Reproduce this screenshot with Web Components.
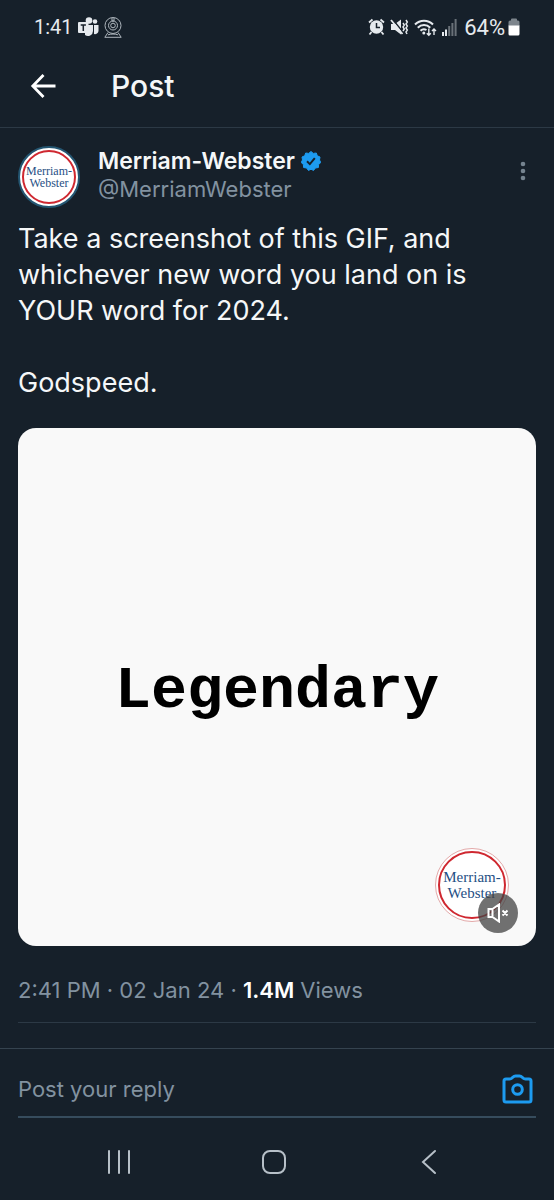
<!DOCTYPE html>
<html lang="en">
<head>
<meta charset="utf-8">
<meta name="viewport" content="width=device-width, initial-scale=1">
<title>Post</title>
<style>
	:root {
		--bg: #16202a;
		--text: #f5f7f8;
		--muted: #8292a0;
		--line: #2c3945;
		--blue: #1d9bf0;
		--side: 18px;
	}

	body {
		margin: 0;
		background: var(--bg);
		color: var(--text);
		font-family: Inter, 'Liberation Sans', sans-serif;
	}
</style>
</head>
<body>
<post-screen>
	<status-bar slot="top" time="1:41" battery="64%"></status-bar>
	<page-header slot="top">Post</page-header>
	<post-card name="Merriam-Webster" handle="@MerriamWebster">
		<span slot="text">Take a screenshot of this GIF, and whichever new word you land on is YOUR word for 2024.<br><br>Godspeed.</span>
		<gif-player slot="media">Legendary</gif-player>
		<span slot="date">2:41 PM · 02 Jan 24</span>
		<span slot="views">1.4M</span>
	</post-card>
	<reply-bar slot="bottom"></reply-bar>
	<nav-bar slot="bottom"></nav-bar>
</post-screen>

<script>
function define(name, html, setup) {
	const template = document.createElement('template');
	template.innerHTML = html;

	customElements.define(name, class extends HTMLElement {
		connectedCallback() {
			if (this.shadowRoot) return;
			const root = this.attachShadow({ mode: 'open' });
			root.appendChild(template.content.cloneNode(true));
			if (setup) setup(this, root);
		}
	});
}

// shared by every element that holds icon buttons
const buttonReset = `
	button {
		display: flex;
		align-items: center;
		justify-content: center;
		padding: 0;
		border: 0;
		background: none;
		color: inherit;
		font: inherit;
		cursor: pointer;
	}
	svg { display: block; flex: none; }
`;

define('post-screen', `
	<style>
		:host {
			display: flex;
			flex-direction: column;
			min-height: 100vh;
		}
		main { flex: 1; }
	</style>
	<slot name="top"></slot>
	<main><slot></slot></main>
	<slot name="bottom"></slot>
`);

define('status-bar', `
	<style>
		:host {
			display: flex;
			align-items: center;
			justify-content: space-between;
			height: 54px;
			padding: 0 34px;
			font-family: Roboto, sans-serif;
			font-size: 22px;
			color: #e6eaee;
		}
		.group { display: flex; align-items: center; gap: 5px; }
		.time { font-size: 20px; }
		.battery { display: flex; align-items: center; gap: 3px; margin-left: 2px; }
		svg { display: block; }
	</style>
	<div class="group">
		<span class="time"></span>
		<svg width="21" height="20" viewBox="0 0 21 20" fill="currentColor">
			<circle cx="11" cy="3.5" r="3.3"/>
			<circle cx="17" cy="4.5" r="2.3"/>
			<path d="M7 8h8v6a5 5 0 0 1-8 4z"/>
			<path d="M16 8h4.500v6a3.500 3.500 0 0 1-4.500 3z"/>
			<rect x="0" y="5" width="10.500" height="11" rx="1"/>
			<path d="M2.700 8h5.200M5.300 8v6" stroke="#17202a" stroke-width="1.500" fill="none"/>
		</svg>
		<svg width="18" height="21" viewBox="0 0 18 21" fill="none" stroke="#aeb6bd" stroke-width="1">
			<circle cx="9" cy="8.500" r="8"/>
			<circle cx="9" cy="8.500" r="4.500"/>
			<circle cx="9" cy="8.500" r="2.300"/>
			<path d="M8 1v3h2V1M4 15.500L.8 20.300h16.400L14 15.500M4 17.800c3-1 7-1 10 0"/>
		</svg>
	</div>
	<div class="group">
		<svg width="17" height="18" viewBox="0 0 17 18">
			<circle cx="8.500" cy="9" r="6.700" fill="currentColor"/>
			<path d="M1 4.500L4.500 1.500M16 4.500L12.500 1.500M3.500 14L1.500 16.500M13.500 14l2 2.500" stroke="currentColor" stroke-width="1.800"/>
			<path d="M8.500 5v4.500h3.500" fill="none" stroke="#17202a" stroke-width="1.500"/>
		</svg>
		<svg width="19" height="18" viewBox="0 0 19 18">
			<path d="M1 6h4l6-4.500v15L5 12H1z" fill="currentColor"/>
			<path d="M2 .5l12 15" stroke="#17202a" stroke-width="1.500"/>
			<path d="M1 2l11.500 14" stroke="currentColor" stroke-width="1.800"/>
			<path d="M13 5l1.300 2L13 9l1.300 2L13 13M16 2l1.300 2L16 6l1.300 2L16 10l1.300 2L16 14l1 2" fill="none" stroke="currentColor" stroke-width="1.500"/>
		</svg>
		<svg width="23" height="19" viewBox="0 0 23 19" fill="none" stroke="currentColor" stroke-width="2">
			<path d="M1 6.500a12.500 12.500 0 0 1 18 0M3.800 9.800a8.500 8.500 0 0 1 12.400 0M6.500 12.800a5 5 0 0 1 6-.8"/>
			<circle cx="9.800" cy="15" r="1.500" fill="currentColor" stroke="none"/>
			<path d="M14.800 10.500v7M12.800 15.200l2 2 2-2M20 17v-6M18 13l2-2 2 2" stroke-width="1.400"/>
		</svg>
		<svg width="15" height="17" viewBox="0 0 15 17" fill="currentColor">
			<path d="M0 13h2v4H0zM3 10.500h2V17H3z"/>
			<path d="M6.200 7h2v10h-2zM9.400 4h2v13h-2zM12.600 0h2v17h-2z" opacity=".4"/>
		</svg>
		<span class="battery">
			<span class="level"></span>
			<svg width="12" height="18" viewBox="0 0 12 18">
				<path d="M3 2.500V1.500Q3 .5 4 .5h4q1 0 1 1v1h1q1.500 0 1.500 1.500v4H.5V4q0-1.500 1.500-1.500z" fill="#7d858c"/>
				<path d="M.5 7.500h11V16q0 1.500-1.500 1.500H2Q.5 17.500.5 16z" fill="#fff"/>
			</svg>
		</span>
	</div>
`, (host, root) => {
	root.querySelector('.time').textContent = host.getAttribute('time');
	root.querySelector('.level').textContent = host.getAttribute('battery');
});

define('page-header', `
	<style>
		${buttonReset}
		:host {
			display: flex;
			align-items: center;
			gap: 54px;
			height: 74px;
			padding: 0 30px 10px;
			box-sizing: border-box;
			border-bottom: 1px solid var(--line);
		}
		h1 {
			margin: 0;
			font-size: 30px;
			font-weight: 500;
		}
	</style>
	<button aria-label="Back">
		<svg width="27" height="26" viewBox="0 0 27 26" fill="none" stroke="#fff" stroke-width="2.800">
			<path d="M25.500 13H3M13.500 2L2.800 13l10.700 11"/>
		</svg>
	</button>
	<h1><slot></slot></h1>
`);

define('mw-logo', `
	<style>
		:host {
			display: flex;
			align-items: center;
			justify-content: center;
			width: 62px;
			height: 62px;
			box-sizing: border-box;
			border: 2px solid #245672;
			border-radius: 50%;
			background: #fff;
			padding: 2px;
			font-size: 12px;
			line-height: 12px;
		}
		:host([large]) {
			width: 74px;
			height: 74px;
			border: 1px solid #e3a9a9;
			font-size: 15px;
			line-height: 16px;
		}
		.ring {
			display: flex;
			align-items: center;
			justify-content: center;
			width: 100%;
			height: 100%;
			box-sizing: border-box;
			border: 2px solid #cf2830;
			border-radius: 50%;
			color: #1f4f84;
			font-family: 'Liberation Serif', serif;
			text-align: center;
		}
	</style>
	<div class="ring"><span>Merriam-<br>Webster</span></div>
`);

define('post-card', `
	<style>
		${buttonReset}
		:host {
			display: block;
			padding: 18px var(--side) 0;
		}
		.author {
			display: flex;
			align-items: center;
			gap: 18px;
		}
		.names {
			flex: 1;
			font-size: 22px;
			line-height: 28px;
			padding-bottom: 4px;
		}
		.name {
			display: flex;
			align-items: center;
			gap: 6px;
			font-size: 23px;
			font-weight: 600;
		}
		.handle, .meta { color: var(--muted); }
		.more { width: 26px; height: 40px; margin-bottom: 12px; }
		.text {
			margin: 13px 0 27px;
			font-size: 27px;
			line-height: 36px;
		}
		.meta {
			margin: 0;
			padding: 29px 0 17px;
			border-bottom: 1px solid var(--line);
			font-size: 22px;
			line-height: 30px;
		}
		.meta b { color: #fff; font-weight: 600; }
	</style>
	<article>
		<div class="author">
			<mw-logo></mw-logo>
			<div class="names">
				<div class="name">
					<span id="name"></span>
					<svg width="20" height="20" viewBox="0 0 20 20" aria-label="Verified">
						<path d="M10 .5l2.300 1.900 3-.4 1 2.800 2.700 1.200-.5 3 1.300 2.500-2.200 2-.2 3-3 .5-1.800 2.400L10 18.300l-2.600 1.100-1.800-2.400-3-.5-.2-3-2.200-2L1.500 9 1 6l2.700-1.200 1-2.800 3 .4z" fill="#1d9bf0" stroke="#1d9bf0" stroke-linejoin="round"/>
						<path d="M6 10.300l2.800 2.800 5-6" fill="none" stroke="#17202a" stroke-width="2"/>
					</svg>
				</div>
				<div class="handle"></div>
			</div>
			<button class="more" aria-label="More">
				<svg width="6" height="20" viewBox="0 0 6 20" fill="#75838f">
					<circle cx="3" cy="3" r="2.300"/><circle cx="3" cy="10" r="2.300"/><circle cx="3" cy="17" r="2.300"/>
				</svg>
			</button>
		</div>
		<div class="text"><slot name="text"></slot></div>
		<slot name="media"></slot>
		<p class="meta"><slot name="date"></slot> · <b><slot name="views"></slot></b> Views</p>
	</article>
`, (host, root) => {
	root.querySelector('#name').textContent = host.getAttribute('name');
	root.querySelector('.handle').textContent = host.getAttribute('handle');
});

define('gif-player', `
	<style>
		${buttonReset}
		:host {
			display: flex;
			align-items: center;
			justify-content: center;
			position: relative;
			aspect-ratio: 1;
			border-radius: 18px;
			background: #f9f9f9;
			color: #000;
		}
		.word {
			padding-top: 8px;
			font-family: 'Liberation Mono', monospace;
			font-size: 60px;
			font-weight: 700;
		}
		/* logo and mute button lie over the picture */
		mw-logo { position: absolute; right: 27px; bottom: 24px; }
		.mute {
			position: absolute;
			right: 18px;
			bottom: 13px;
			width: 40px;
			height: 40px;
			border-radius: 50%;
			background: rgba(65, 65, 65, 0.75);
		}
	</style>
	<span class="word"><slot></slot></span>
	<mw-logo large></mw-logo>
	<button class="mute" aria-label="Unmute">
		<svg width="22" height="20" viewBox="0 0 22 20" fill="none" stroke="#fff" stroke-width="2">
			<path d="M1.500 6h4v8h-4zM5.500 6L12 1.500v17L5.500 14M15.500 7.500l5 5M20.500 7.500l-5 5"/>
		</svg>
	</button>
`);

define('reply-bar', `
	<style>
		${buttonReset}
		:host {
			display: block;
			padding: 0 var(--side);
			border-top: 1px solid #35434f;
		}
		.field {
			display: flex;
			align-items: center;
			height: 69px;
			box-sizing: border-box;
			padding: 12px 3px 0 0;
			border-bottom: 2px solid #364c5d;
		}
		input {
			flex: 1;
			min-width: 0;
			padding: 0;
			border: 0;
			outline: 0;
			background: none;
			color: var(--text);
			font: inherit;
			font-size: 22px;
			line-height: 30px;
		}
		input::placeholder { color: var(--muted); opacity: 1; }
	</style>
	<div class="field">
		<input type="text" placeholder="Post your reply" aria-label="Post your reply">
		<button aria-label="Add photo">
			<svg width="31" height="30" viewBox="0 0 31 30" fill="none" stroke="#1d9bf0" stroke-width="3">
				<path d="M4 5h3.500q1.500 0 2.500-1l.8-.8Q12 2 13.500 2h4q1.500 0 2.700 1.200L21 4q1 1 2.500 1H27q2 0 2 2v19q0 2-2 2H4q-2 0-2-2V7q0-2 2-2z"/>
				<circle cx="15.500" cy="15.500" r="4.800"/>
			</svg>
		</button>
	</div>
`);

define('nav-bar', `
	<style>
		${buttonReset}
		:host {
			display: flex;
			align-items: center;
			height: 82px;
			box-sizing: border-box;
			padding: 6px 48px 0 41px;
		}
		button { flex: 1; height: 48px; }
	</style>
	<button aria-label="Recent apps">
		<svg width="24" height="26" viewBox="0 0 24 26" stroke="#b7c0c8" stroke-width="2" stroke-linecap="round">
			<path d="M2 2v22M12 2v22M22 2v22"/>
		</svg>
	</button>
	<button aria-label="Home">
		<svg width="26" height="26" viewBox="0 0 26 26" fill="none" stroke="#b7c0c8" stroke-width="2">
			<rect x="2" y="2" width="22" height="22" rx="7"/>
		</svg>
	</button>
	<button aria-label="Back">
		<svg width="16" height="26" viewBox="0 0 16 26" fill="none" stroke="#b7c0c8" stroke-width="2" stroke-linecap="round">
			<path d="M14 2L2 13l12 11"/>
		</svg>
	</button>
`);
</script>
</body>
</html>
